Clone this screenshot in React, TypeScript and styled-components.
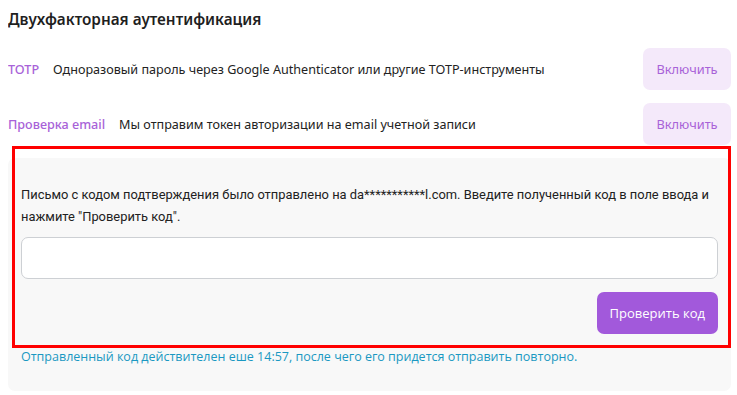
import React from "react";
import styled, { createGlobalStyle } from "styled-components";

const GlobalStyle = createGlobalStyle`
  html, body {
    overflow: hidden;
  }
  body {
    margin: 8px 0 0 8px;
    background: #fff;
    font-family: "Open Sans", "Noto Sans", sans-serif;
    color: #212121;
  }
`;

const Page = styled.div`
  width: 723px;
`;

const Title = styled.h2`
  margin: 0;
  font-family: "Noto Sans", sans-serif;
  font-size: 15.3px;
  font-weight: 600;
  line-height: 22px;
  color: #1f1f1f;
`;

const MethodList = styled.div`
  display: flex;
  flex-direction: column;
  gap: 13px;
  margin-top: 18px;
`;

const MethodRow = styled.div`
  display: flex;
  align-items: center;
  height: 42px;
`;

const MethodName = styled.span`
  font-family: "Noto Sans", sans-serif;
  font-size: 12.6px;
  font-weight: 500;
  color: #a862d8;
  margin-right: 14px;
  white-space: nowrap;
`;

const MethodText = styled.span`
  flex: 1;
  font-family: "Noto Sans", sans-serif;
  font-size: 12.6px;
  color: #222;
`;

const EnableButton = styled.button`
  width: 88px;
  height: 42px;
  border: none;
  border-radius: 7px;
  background: #f4e9fa;
  color: #a862d8;
  font-family: "Noto Sans", sans-serif;
  font-size: 12.8px;
  cursor: pointer;
`;

const Panel = styled.div`
  position: relative;
  margin-top: 13px;
  background: #f8f8f8;
  border-radius: 7px;
  padding: 26px 13px 24px 13px;
`;

const Notice = styled.p`
  margin: 0;
  font-family: "Roboto", sans-serif;
  font-size: 12.9px;
  line-height: 22px;
  color: #212121;
`;

const CodeInput = styled.input`
  display: block;
  box-sizing: border-box;
  width: 100%;
  height: 42px;
  margin-top: 9px;
  border: 1px solid #cdd0d4;
  border-radius: 7px;
  background: #fff;
  outline: none;
`;

const Actions = styled.div`
  display: flex;
  justify-content: flex-end;
  margin-top: 13px;
`;

const VerifyButton = styled.button`
  height: 42px;
  padding: 0 13px;
  border: none;
  border-radius: 7px;
  background: #a259db;
  color: #fff;
  font-family: "Open Sans", sans-serif;
  font-size: 13px;
  cursor: pointer;
`;

const Timer = styled.div`
  margin-top: 13px;
  font-size: 12.5px;
  line-height: 20px;
  color: #1a98c2;
`;

// red annotation frame drawn over the screenshot
const Highlight = styled.div`
  position: absolute;
  top: -12px;
  left: 4px;
  right: 0;
  height: 202px;
  box-sizing: border-box;
  border: 3px solid #ff0000;
  pointer-events: none;
`;

const methods = [
  {
    name: "TOTP",
    text: "Одноразовый пароль через Google Authenticator или другие TOTP-инструменты",
  },
  {
    name: "Проверка email",
    text: "Мы отправим токен авторизации на email учетной записи",
  },
];

export default function App() {
  return (
    <>
      <GlobalStyle />
      <Page>
        <Title>Двухфакторная аутентификация</Title>
        <MethodList>
          {methods.map((m) => (
            <MethodRow key={m.name}>
              <MethodName>{m.name}</MethodName>
              <MethodText>{m.text}</MethodText>
              <EnableButton>Включить</EnableButton>
            </MethodRow>
          ))}
        </MethodList>
        <Panel>
          <Notice>
            Письмо с кодом подтверждения было отправлено на da***********l.com. Введите полученный код в поле ввода и
            нажмите "Проверить код".
          </Notice>
          <CodeInput />
          <Actions>
            <VerifyButton>Проверить код</VerifyButton>
          </Actions>
          <Timer>Отправленный код действителен еше 14:57, после чего его придется отправить повторно.</Timer>
          <Highlight />
        </Panel>
      </Page>
    </>
  );
}
